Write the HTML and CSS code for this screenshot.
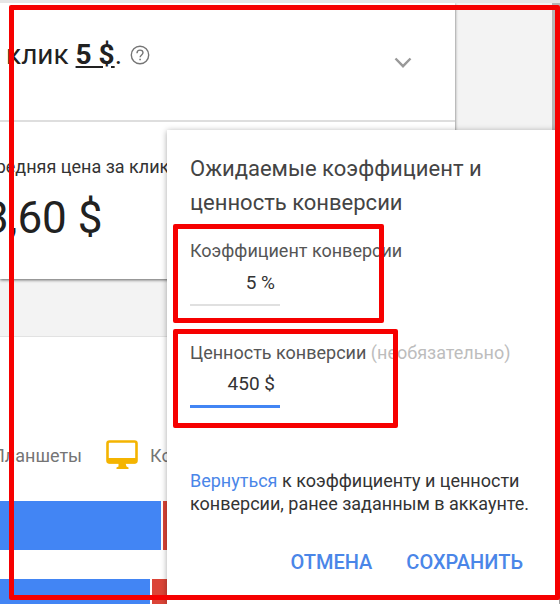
FILE: index.html
```
<!DOCTYPE html>
<html lang="ru">
<head>
    <meta charset="UTF-8">
    <meta name="viewport" content="width=device-width, initial-scale=1.0">
    <title>Планировщик кампаний</title>
    <link rel="stylesheet" href="styles.css">
</head>
<body>
    <div class="page">
        <main class="content">
            <section class="card forecast">
                <div class="forecast-header">
                    <div class="bid">
                        <span>клик <a class="bid-value" href="#">5 $</a>.</span>
                        <button class="icon-btn" aria-label="Справка">
                            <svg width="20" height="20" viewBox="0 0 20 20" fill="none" stroke="#757575">
                                <circle cx="10" cy="10" r="8.7" stroke-width="1.4"/>
                                <path d="M7 8.2C7 6.2 8.3 5.1 10 5.1s3 1.1 3 2.7c0 2-2.9 2.3-2.9 4.5" stroke-width="1.4"/>
                                <path d="M10.1 13.7v1.6" stroke-width="1.6"/>
                            </svg>
                        </button>
                    </div>
                    <button class="icon-btn expand-btn" aria-label="Развернуть">
                        <svg width="18" height="12" viewBox="0 0 18 12" fill="none" stroke="#999" stroke-width="2.4">
                            <path d="M1.5 1.5L9 9.2l7.5-7.7"/>
                        </svg>
                    </button>
                </div>
                <div class="metric">
                    <div class="metric-label">Средняя цена за клик</div>
                    <div class="metric-value">3,60 $</div>
                </div>
            </section>

            <section class="devices">
                <div class="legend">
                    <span class="legend-tablets">Планшеты</span>
                    <svg width="32" height="30" viewBox="0 0 32 30">
                        <rect x="1.5" y="1.5" width="29" height="21" rx="2" fill="#fff" stroke="#f4b400" stroke-width="2.6"/>
                        <path d="M1 18h30v3q0 2.5-2.5 2.5h-25Q1 23.5 1 21z" fill="#f4b400"/>
                        <path d="M12.5 23h7l1 3.5 2 1V29h-12v-1.5l2-1z" fill="#f4b400"/>
                    </svg>
                    <span>Компьютеры</span>
                </div>
                <div class="bar">
                    <div class="bar-mobile" style="width: 161px"></div>
                    <div class="bar-tablet"></div>
                </div>
                <div class="bar">
                    <div class="bar-mobile" style="width: 150px"></div>
                    <div class="bar-tablet"></div>
                </div>
            </section>
        </main>
        <div class="scrollbar"></div>

        <form class="dialog" role="dialog" aria-labelledby="dialog-title">
            <h2 id="dialog-title">Ожидаемые коэффициент и ценность конверсии</h2>
            <div class="field field-rate">
                <label for="rate">Коэффициент конверсии</label>
                <input id="rate" type="text" value="5 %">
            </div>
            <div class="field field-value">
                <label for="value">Ценность конверсии <span class="optional">(необязательно)</span></label>
                <input id="value" class="active" type="text" value="450 $">
            </div>
            <p class="note"><a href="#">Вернуться</a> к коэффициенту и ценности конверсии, ранее заданным в аккаунте.</p>
            <div class="actions">
                <button type="button">Отмена</button>
                <button type="button">Сохранить</button>
            </div>
        </form>

        <div class="highlight"></div>
    </div>
</body>
</html>
```
FILE: styles.css
```
* {
    box-sizing: border-box;
}

body {
    margin: 0;
    font-family: Roboto, "Liberation Sans", sans-serif;
    color: #212121;
    background: #f3f3f3;
}

button {
    padding: 0;
    border: none;
    background: none;
    font-family: inherit;
    cursor: pointer;
}

.page {
    position: relative;
    display: flex;
    height: 100vh;
    overflow: hidden;
    border-top: 3px solid #e6e6e6;
}

.content {
    flex: 1;
    min-width: 0;
}

.scrollbar {
    width: 8px;
    background: #b5b5b5;
}

.card {
    margin-right: 97px;
    background: #fff;
    box-shadow: 0 1px 3px rgba(0, 0, 0, 0.6);
}

.forecast {
    height: 276px;
}

.forecast-header {
    display: flex;
    align-items: center;
    justify-content: space-between;
    height: 119px;
    padding: 0 43px 14px 6px;
    border-bottom: 2px solid #dedede;
}

.bid {
    display: flex;
    align-items: center;
    gap: 8px;
    font-size: 28px;
}

.bid-value {
    color: inherit;
    font-weight: 700;
}

.icon-btn {
    display: flex;
}

.expand-btn {
    padding-top: 16px;
}

.metric {
    margin-left: -16px;
    padding-top: 32px;
    white-space: nowrap;
}

.metric-label {
    font-size: 18px;
    line-height: 26px;
    color: #333;
}

.metric-value {
    margin-top: 12px;
    font-size: 44px;
    line-height: 52px;
}

.devices {
    height: 100%;
    margin-top: 57px;
    padding-top: 103px;
    border-top: 1px solid #e2e2e2;
    background: #fff;
}

.legend {
    display: flex;
    align-items: center;
    gap: 12px;
    height: 30px;
    margin-bottom: 31px;
    font-size: 18px;
    color: #757575;
}

.legend-tablets {
    margin: 0 12px 0 -8px;
}

.bar {
    display: flex;
    gap: 2px;
    height: 49px;
    margin-bottom: 29px;
}

.bar-mobile {
    background: #4285f4;
}

.bar-tablet {
    flex: 1;
    background: #db4437;
}

/* Conversion settings popup */
.dialog {
    position: absolute;
    top: 127px;
    right: 1px;
    bottom: 0;
    left: 167px;
    padding: 22px 16px 0 23px;
    background: #fff;
    box-shadow: 0 1px 6px rgba(0, 0, 0, 0.35);
}

.dialog h2 {
    max-width: 320px;
    margin: 0 0 15px;
    font-size: 22px;
    font-weight: 400;
    line-height: 34px;
    color: #444;
}

.field {
    position: relative;
    height: 102px;
    padding-top: 4px;
}

.field label {
    display: block;
    font-size: 18px;
    line-height: 24px;
    color: #555;
    white-space: nowrap;
}

.field .optional {
    color: #bdbdbd;
}

.field input {
    display: block;
    width: 90px;
    height: 43px;
    padding: 0 5px 3px 0;
    border: none;
    border-bottom: 2px solid #e0e0e0;
    outline: none;
    background: none;
    font-family: inherit;
    font-size: 19px;
    color: #333;
    text-align: right;
}

.field input.active {
    border-bottom: 3px solid #4285f4;
}

/* Red marker frames */
.field::after,
.highlight {
    content: "";
    position: absolute;
    box-sizing: border-box;
    border: 5px solid #f60000;
    border-radius: 2px;
    pointer-events: none;
}

.field::after {
    top: -11px;
    left: -17px;
    height: 99px;
}

.field-rate::after {
    width: 211px;
}

.field-value::after {
    top: -8px;
    width: 225px;
}

.highlight {
    top: 2px;
    right: 0;
    bottom: 4px;
    left: 9px;
}

.note {
    margin: 30px 0 0;
    font-size: 18px;
    line-height: 23px;
    color: #333;
}

.note a {
    color: #4a86e8;
    text-decoration: none;
}

.actions {
    display: flex;
    justify-content: flex-end;
    gap: 34px;
    margin-top: 35px;
    padding-right: 20px;
}

.actions button {
    font-size: 20px;
    font-weight: 500;
    line-height: 24px;
    text-transform: uppercase;
    color: #4a86e8;
}
```
